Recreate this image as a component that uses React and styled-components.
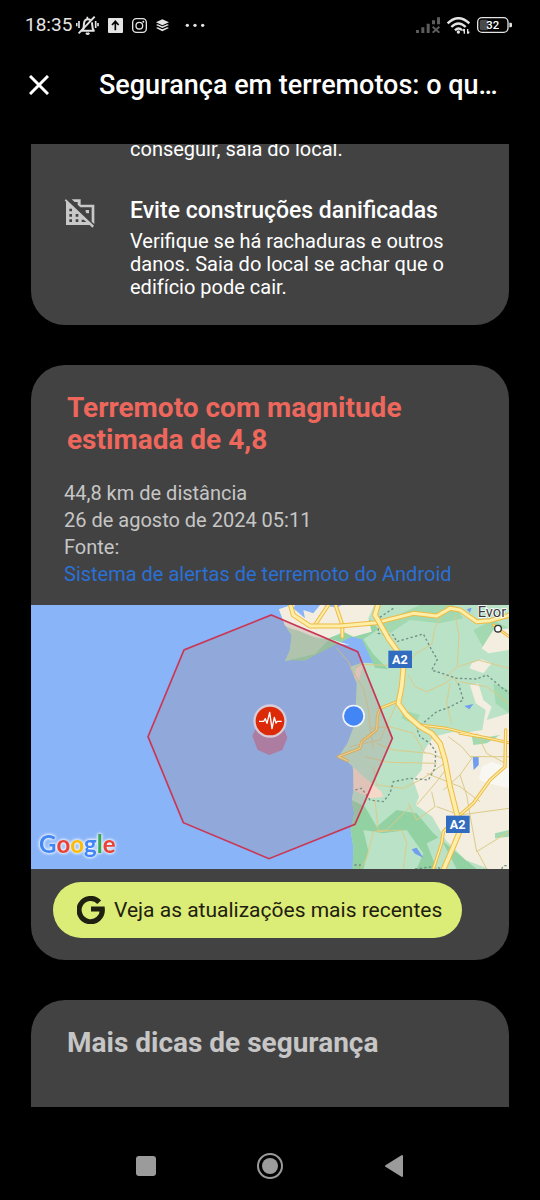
// --------------------------------------------------
//   Import
// --------------------------------------------------

import React from 'react';
import styled, { createGlobalStyle } from 'styled-components';



// --------------------------------------------------
//   Styled Components: Page
// --------------------------------------------------

const GlobalStyle = createGlobalStyle`
  * {
    box-sizing: border-box;
  }
  
  body {
    margin: 0;
    background: #000;
    color: #fff;
    font-family: Roboto, "Liberation Sans", sans-serif;
  }
`;

const Screen = styled.div`
  display: flex;
  flex-flow: column nowrap;
  min-height: 100vh;
`;

const IconButton = styled.button`
  display: flex;
  align-items: center;
  justify-content: center;
  width: ${props => props.$size}px;
  height: ${props => props.$size}px;
  margin: 0;
  padding: 0;
  border: 0;
  background: none;
  color: inherit;
  cursor: pointer;
`;


// --------------------------------------------------
//   Styled Components: Status Bar
// --------------------------------------------------

const StatusBar = styled.div`
  display: flex;
  align-items: center;
  justify-content: space-between;
  height: 50px;
  padding: 0 28px 0 25px;
  color: #e4e4e4;
`;

const StatusGroup = styled.div`
  display: flex;
  align-items: center;
  gap: ${props => props.$gap}px;
`;

const Clock = styled.span`
  font-size: 19px;
  line-height: 24px;
`;


// --------------------------------------------------
//   Styled Components: App Bar
// --------------------------------------------------

const AppBar = styled.header`
  display: flex;
  align-items: center;
  gap: 50px;
  height: 70px;
  padding: 0 28px;
`;

const Title = styled.h1`
  flex: 1;
  margin: 0;
  overflow: hidden;
  font-size: 27px;
  font-weight: 500;
  line-height: 36px;
  white-space: nowrap;
`;


// --------------------------------------------------
//   Styled Components: Cards
// --------------------------------------------------

const Content = styled.main`
  display: flex;
  flex: 1;
  flex-flow: column nowrap;
  gap: 40px;
  margin-top: 24px;
  padding: 0 31px;
  overflow: hidden;
`;

const Card = styled.section`
  flex: ${props => (props.$grow ? '1 0 auto' : '0 0 auto')};
  overflow: hidden;
  border-radius: ${props => props.$radius};
  background: #424242;
`;

const TipList = styled.div`
  display: flex;
  flex-flow: column nowrap;
  gap: 36px;
  margin-top: -6px;
  padding: 0 32px 26px 33px;
`;

const Tip = styled.div`
  display: grid;
  grid-template-columns: 32px 1fr;
  gap: 34px;
  color: #c8c8c8;
`;

const TipBody = styled.div`
  grid-column: 2;
  color: #fff;
`;

const TipTitle = styled.h2`
  margin: 0 0 5px;
  font-size: 23px;
  font-weight: 500;
  line-height: 28px;
`;

const TipText = styled.p`
  margin: 0;
  font-size: 20px;
  line-height: 23px;
`;

const CardTitle = styled.h2`
  margin: 0;
  padding: 27px 36px 0;
  font-size: 28px;
  font-weight: 700;
  line-height: 32px;
  color: ${props => props.$color};
`;

const Details = styled.div`
  display: flex;
  flex-flow: column nowrap;
  align-items: flex-start;
  padding: 24px 33px 17px;
  font-size: 20px;
  line-height: 27px;
  color: #c6c6c6;
`;

const SourceLink = styled.a`
  color: #2a70d6;
  text-decoration: none;
`;

const UpdatesButton = styled.button`
  display: flex;
  align-items: center;
  gap: 9px;
  height: 56px;
  margin: 13px 22px 22px;
  padding: 0 20px 0 24px;
  border: 0;
  border-radius: 28px;
  background: #dbed76;
  color: #1f2010;
  font-family: inherit;
  font-size: 21px;
  line-height: 28px;
  cursor: pointer;
`;


// --------------------------------------------------
//   Styled Components: Map
// --------------------------------------------------

const MapSvg = styled.svg`
  display: block;
  width: 100%;
  height: auto;
  
  .border { fill: none; stroke: #6f8f84; stroke-width: 4; stroke-dasharray: 7 7; }
  .minor { fill: none; stroke: #dccb88; stroke-width: 3; stroke-linejoin: round; }
  .edge { fill: none; stroke: #eebb45; stroke-linejoin: round; stroke-linecap: round; }
  .road { fill: none; stroke: #ffeea8; stroke-linejoin: round; stroke-linecap: round; }
  .shield { fill: #326cc0; }
  .shieldText { fill: #fff; font-size: 38px; font-weight: 700; text-anchor: middle; }
  .city { fill: #3b3b3b; stroke: #fff; stroke-width: 5; paint-order: stroke; font-size: 44px; }
  .logo {
    font-family: Lato, sans-serif;
    font-size: 72px;
    font-weight: 700;
    filter: drop-shadow(0 0 4px #fff) drop-shadow(0 0 4px #e3edfc);
  }
`;


// --------------------------------------------------
//   Styled Components: Navigation
// --------------------------------------------------

const NavBar = styled.nav`
  display: flex;
  justify-content: center;
  gap: 96px;
  padding: 45px 0 20px;
  color: #9b9b9b;
`;



// --------------------------------------------------
//   Icons
// --------------------------------------------------

const IconMuted = () => (
  <svg width="23" height="20" viewBox="0 0 69 60" fill="none" stroke="currentColor" strokeWidth="6">
    <path d="M16 47h40M20 46c4-6 3-13 4-21 1-8 6-12 12-12 3 0 6 1 8 3M48 22c1 10 0 18 5 24" />
    <path d="M30 54q5 5 10 0" />
    <path d="M34 12V5M9 18v21M2 24v10M59 18v21M66 24v10" strokeWidth="5" />
    <path d="M8 55L56 5" />
  </svg>
);

const IconUpload = () => (
  <svg width="15" height="15" viewBox="0 0 45 45">
    <rect width="45" height="45" rx="3" fill="currentColor" />
    <path d="M22 37V12M12 21l10-11 10 11" fill="none" stroke="#000" strokeWidth="5" />
  </svg>
);

const IconCamera = () => (
  <svg width="15" height="15" viewBox="0 0 45 45" fill="none" stroke="currentColor" strokeWidth="4">
    <rect x="2" y="2" width="41" height="41" rx="11" />
    <circle cx="22" cy="23" r="10" />
    <circle cx="34" cy="11" r="3" fill="currentColor" stroke="none" />
  </svg>
);

const IconLayers = () => (
  <svg width="13" height="13" viewBox="0 0 39 39" fill="currentColor">
    <path d="M19 1l20 9-20 9L0 10z" />
    <path d="M0 18l5-2 14 6 15-6 5 2-20 9z" />
    <path d="M0 27l5-2 14 6 15-6 5 2-20 10z" />
  </svg>
);

const IconMore = () => (
  <svg width="28" height="5" viewBox="-20 0 84 15" fill="currentColor">
    <circle cx="8" cy="7" r="5" />
    <circle cx="31" cy="7" r="5" />
    <circle cx="54" cy="7" r="5" />
  </svg>
);

const IconSignal = () => (
  <svg width="24" height="16" viewBox="0 0 72 48" fill="#5c5c5c">
    <path d="M0 39h9v9H0zM16 31h9v17h-9zM32 20h9v28h-9zM48 10h9v12h-9zM63 1h9v21h-9z" />
    <path d="M50 29l20 18M70 29L50 47" fill="none" stroke="#5c5c5c" strokeWidth="6" />
  </svg>
);

const IconWifi = () => (
  <svg width="23" height="17" viewBox="0 0 69 51" fill="none" stroke="currentColor" strokeWidth="7">
    <path d="M2 19q32-31 65 0M13 30q21-21 43 0M24 40q11-11 21 0" />
    <circle cx="34" cy="45" r="5" fill="currentColor" stroke="none" />
    <path d="M52 36v14M47 42l5-6M62 36v14M62 50l5-6" strokeWidth="4" />
  </svg>
);

const IconBattery = () => (
  <svg width="35" height="16" viewBox="0 0 105 48">
    <rect x="2" y="2" width="91" height="44" rx="13" fill="none" stroke="currentColor" strokeWidth="4" />
    <rect x="8" y="8" width="26" height="32" rx="6" fill="#4a4a4a" />
    <path d="M97 17h4q4 0 4 4v6q0 4-4 4h-4z" fill="currentColor" />
    <text x="47" y="36" fill="#fff" fontSize="34" fontWeight="500" textAnchor="middle">32</text>
  </svg>
);

const IconClose = () => (
  <svg width="20" height="20" viewBox="0 0 20 20" fill="none" stroke="currentColor" strokeWidth="3">
    <path d="M1 1l18 18M19 1L1 19" />
  </svg>
);

const IconBuilding = () => (
  <svg width="32" height="32" viewBox="-3 -4 96 96">
    <path d="M3 3l84 79-5 6-8-8H3V10L-1 6z" fill="currentColor" />
    <path d="M20 3h27v16h41v58l-8-7V27H46l-8-8v-8h-9z" fill="currentColor" />
    <path d="M62 35h10v10h-7l-3-3z" fill="currentColor" />
    <path d="M13 31h8v8h-8zM13 47h8v8h-8zM13 63h8v8h-8zM32 47h8v8h-8zM32 63h8v8h-8zM50 64h6l8 7H50z" fill="#424242" />
  </svg>
);

const IconG = () => (
  <svg width="28" height="28" viewBox="0 0 82 82" fill="none" stroke="currentColor" strokeWidth="15">
    <path d="M65 18A34 34 0 1 0 74 38H41" />
  </svg>
);



// --------------------------------------------------
//   Map
// --------------------------------------------------

const minorRoads = [
  'M230 145l35 40 20 40 25 40 15 60 5 60',
  'M285 205l20-12 130 5 30-35 50-30 10-50 40-70',
  'M585 45l12 60-5 95-40 35M595 200l60-20 92 25',
  'M445 225l20 35 35 15 55-25 25-20 15 25M570 250l-10 60 15 60',
  'M600 245l80 15 67 50M410 310l-50 110-90 20',
  'M330 385l60-5 70 20 35 60M340 445l-10-60M315 470l70 17 145 3',
  'M350 430l50 20 110 10 50 20M340 500l10 55 80 10 60-30 70-50',
  'M500 520l100 40 60 45M470 615l60-70 30-40',
  'M445 610l25 50 55-40-10-45M450 620l-70 70-40 5-20 80-20 32',
  'M345 600l10 95 70-5 15 40-10 77M530 620l70 25 147-20',
  'M565 410l40 30 30 35-35 50-50 45M600 525l20 60 10 60 20 110 97-60',
  'M650 750l30 57M630 470h117M650 400l30 60 57 30',
];

const borders = [
  'M400 25l-45 30v45l45 5 10 20 80-23 25 48 17 28-17 32 75 25 60 2 30-12 67 55',
  'M595 250l15 50-50 25-30 10-30 25-30 25 10 25 30 20 17 25-2 50-20 35-55-5-50 10-10 35-20 25-40-5-25-35-20 5',
  'M283 795h17v12M465 807l60-8 20 8M725 807l5-10h17',
];

const mainRoads = [
  { d: 'M165 75L205 15M247 110l0-35L225 10', width: 12 },
  { d: 'M90 10l10 35 50 33h90l110-10 110-28 70 8 40-23 30 5 50 35 40-3 60-17', width: 15 },
  { d: 'M410 305l-50 20-8 25-2 40-45 35-5 20-65 25 27 12', width: 9 },
  { d: 'M480 375l80 10 80 20 107 23M600 400l60 10M700 75l47 35', width: 9 },
  { d: 'M600 645l40-35 50-70 45-40 2-110M595 650l-45 45-5 35-25 77', width: 10 },
  { d: 'M355 10l-10 35 20 35 20 35 25 35 20 55-5 55-10 50 25 35 40 35 35 20 25 30 15 50 15 80 20 80 15 40-25 60-30 70', width: 17 },
];

const EarthquakeMap = () => (
  <MapSvg viewBox="0 0 1434 792" role="img" aria-label="Mapa do terremoto">
    <rect width="1434" height="792" fill="#89b4f8" />
    
    <g transform="translate(687 -15)">
      {/* Land */}
      <path fill="#bae2c7" d="M57 28L110 10H760V815H278L280 740 272 690 283 640 275 600 282 560 278 500 262 485 235 470 262 430 285 370 290 250 270 200 305 188 345 190 325 155 310 118 285 108 240 115 190 142 150 170 75 183 90 150 95 105 75 75z" />
      <path fill="#94d3a6" d="M225 108l60-20 45-30 25 30-45 30 30 45 45 45-40-5-20-45-20-40-30-8-60 30-80 42-60-2 50-40z" />
      <path fill="#a2d9b1" d="M480 15h100l30 40-70 15-90-10-60 40-30-30zM640 90l60-30 47 25v60l-70 10zM430 330l50 15-15 30-40-20zM700 250l47 20v70l-40-30z" />
      <path fill="#92d1a2" d="M275 600l40 20 35 60 60-50 60 10 50 60 60 50 70 57H278l2-67-8-50 11-50z" />
      <path fill="#bae2c7" d="M310 690l60 10 70-10 50 70-20 47H310l15-55zM500 730l40-20 50 97h-60z" />
      <path fill="#f3eedf" d="M57 28l53-18h235l-20 45 10 40-55 15-30-15-50 22-60-10-65-30z" />
      <path fill="#89b4f8" d="M105 15h75l-20 25-30-10 5 25-35-30zM190 15h55l-15 8z" />
      <path fill="#b5dcb9" d="M80 85l30 5 60 25 35 5-40 42-90 21 15-33 5-45z" />
      <path fill="#f1f1ee" d="M160 100l60 20 50 15-30-3z" />
      <path fill="#f3eedf" d="M490 455l30-45 60-15 60 15 107 10v387h-60l-70-27-60-60-40-70-50-35 10-25-17-50 25-30z" />
      <path fill="#f3eedf" d="M747 85l-47 5-35 55 20 15 62-10zM635 190l30-12 30 12-25 30-42-15zM630 255l25-5 15 50 25 20-15 40 67-20v90l-60-10-80-20 60-10 10-60-30-20z" />
      <path fill="#f6d8c8" d="M290 200l20-8-15 55-12-15zM280 500l25 25 60 50 5 15-40 5-50-25z" />
      <path fill="#f9f7f1" d="M665 500l30-15 52 20v60l-60-15-30-10z" />
      <path fill="#a2d9b1" d="M635 405l55 5 30-5-40 25-40 5zM705 700l42-10v20l-42 5z" />
      <path fill="#6f9df0" d="M638 470h18v25l-15 15zM455 748l15-5 20 30-25-12zM613 318l27-6-12 16zM620 28l15-5-5 15z" />
      
      {/* Roads */}
      {minorRoads.map(d => <path key={d} className="minor" d={d} />)}
      {borders.map(d => <path key={d} className="border" d={d} />)}
      {mainRoads.map(({ d, width }) => (
        <React.Fragment key={d}>
          <path className="edge" d={d} strokeWidth={width} />
          <path className="road" d={d} strokeWidth={width - 6} />
        </React.Fragment>
      ))}
      
      {/* Labels */}
      <rect className="shield" x="385" y="152" width="71" height="52" />
      <text className="shieldText" x="420" y="191">A2</text>
      <rect className="shield" x="558" y="647" width="71" height="52" />
      <text className="shieldText" x="593" y="686">A2</text>
      <text className="city" x="653" y="51">Evor</text>
      <circle cx="714" cy="86" r="10" fill="#fff" stroke="#333" strokeWidth="4" />
    </g>
    
    {/* Affected area */}
    <path d="M721 30L980 140 1084 400 972 658 714 761 457 653 351 395 459 135z" fill="#a4878e" fillOpacity="0.28" stroke="#c93755" strokeWidth="5" />
    <path d="M717 345l38 15 14 38-15 37-39 15-35-15-16-42 15-33z" fill="#b56f8c" fillOpacity="0.75" />
    
    {/* Epicenter */}
    <circle cx="717" cy="348" r="50" fill="#d9ccd9" />
    <circle cx="717" cy="348" r="43" fill="#dc2a08" />
    <path d="M684 349h14l5-8 5 14 8-33 7 49 7-34 5 17 4-5h13" fill="none" stroke="#fff" strokeWidth="4" strokeLinejoin="round" />
    
    {/* User location */}
    <circle cx="968" cy="333" r="34" fill="#f1f4fb" />
    <circle cx="968" cy="333" r="29" fill="#4285f4" />
    
    <text className="logo" x="24" y="743">
      <tspan fill="#4285f4">G</tspan>
      <tspan fill="#ea4335">o</tspan>
      <tspan fill="#fbbc05">o</tspan>
      <tspan fill="#4285f4">g</tspan>
      <tspan fill="#34a853">l</tspan>
      <tspan fill="#ea4335">e</tspan>
    </text>
  </MapSvg>
);



// --------------------------------------------------
//   App
// --------------------------------------------------

export default function App() {
  return (
    <React.Fragment>
      <GlobalStyle />
      
      <Screen>
        <StatusBar>
          <StatusGroup $gap={9}>
            <StatusGroup $gap={4}>
              <Clock>18:35</Clock>
              <IconMuted />
            </StatusGroup>
            <IconUpload />
            <IconCamera />
            <IconLayers />
            <IconMore />
          </StatusGroup>
          
          <StatusGroup $gap={7}>
            <IconSignal />
            <IconWifi />
            <IconBattery />
          </StatusGroup>
        </StatusBar>
        
        <AppBar>
          <IconButton $size={21} aria-label="Fechar"><IconClose /></IconButton>
          <Title>Segurança em terremotos: o qu…</Title>
        </AppBar>
        
        <Content>
          <Card $radius="0 0 34px 34px">
            <TipList>
              <Tip>
                <TipBody>
                  <TipText>conseguir, saia do local.</TipText>
                </TipBody>
              </Tip>
              
              <Tip>
                <IconBuilding />
                <TipBody>
                  <TipTitle>Evite construções danificadas</TipTitle>
                  <TipText>
                    Verifique se há rachaduras e outros danos. Saia do local se achar que o edifício pode cair.
                  </TipText>
                </TipBody>
              </Tip>
            </TipList>
          </Card>
          
          <Card $radius="34px">
            <CardTitle $color="#ee675c">Terremoto com magnitude estimada de 4,8</CardTitle>
            <Details>
              <span>44,8 km de distância</span>
              <span>26 de agosto de 2024 05:11</span>
              <span>Fonte:</span>
              <SourceLink href="#fonte">Sistema de alertas de terremoto do Android</SourceLink>
            </Details>
            <EarthquakeMap />
            <UpdatesButton>
              <IconG />
              Veja as atualizações mais recentes
            </UpdatesButton>
          </Card>
          
          <Card $radius="34px 34px 0 0" $grow>
            <CardTitle $color="#c6c6c6">Mais dicas de segurança</CardTitle>
          </Card>
        </Content>
        
        <NavBar>
          <IconButton $size={28} aria-label="Recentes">
            <svg width="20" height="20" viewBox="0 0 20 20">
              <rect width="20" height="20" rx="3" fill="currentColor" />
            </svg>
          </IconButton>
          <IconButton $size={28} aria-label="Início">
            <svg width="28" height="28" viewBox="0 0 28 28">
              <circle cx="14" cy="14" r="12" fill="none" stroke="currentColor" strokeWidth="2" />
              <circle cx="14" cy="14" r="8" fill="currentColor" />
            </svg>
          </IconButton>
          <IconButton $size={28} aria-label="Voltar">
            <svg width="20" height="24" viewBox="0 0 20 24">
              <path d="M18 2v20L2 12z" fill="currentColor" stroke="currentColor" strokeWidth="2" strokeLinejoin="round" />
            </svg>
          </IconButton>
        </NavBar>
      </Screen>
    </React.Fragment>
  );
}
